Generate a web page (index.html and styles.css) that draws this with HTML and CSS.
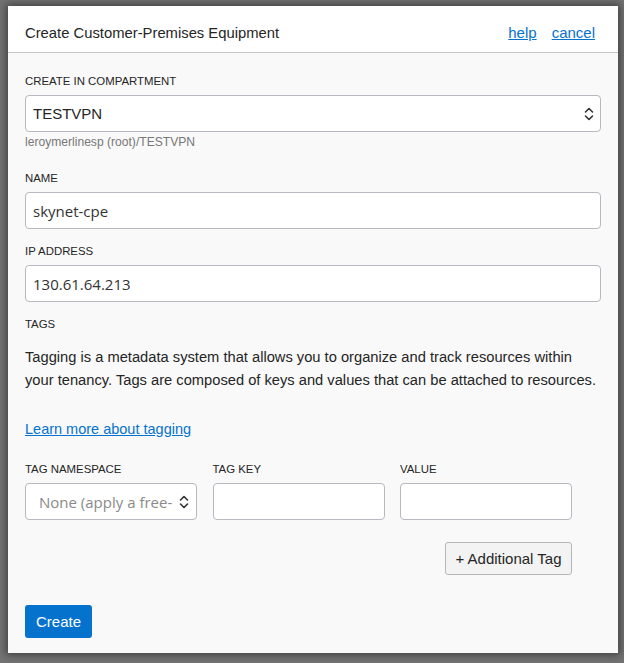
FILE: index.html
```html
<!DOCTYPE html>
<html>
<head>
<meta charset="utf-8">
<link rel="stylesheet" href="styles.css">
</head>
<body>
<div class="dialog">
  <header class="dlg-head">
    <h1 class="dlg-title">Create Customer-Premises Equipment</h1>
    <nav class="dlg-links">
      <a href="#" class="link">help</a>
      <a href="#" class="link">cancel</a>
    </nav>
  </header>
  <div class="dlg-body">
    <div class="field field-first">
      <div class="label">CREATE IN COMPARTMENT</div>
      <div class="control select">
        <span class="sel-text">TESTVPN</span>
        <svg class="chev" width="10" height="16" viewBox="0 0 10 16"><path d="M1.5 6 L5 2.5 L8.5 6 M1.5 10 L5 13.5 L8.5 10" fill="none" stroke="#333" stroke-width="1.6" stroke-linecap="round" stroke-linejoin="round"/></svg>
      </div>
      <div class="helper">leroymerlinesp (root)/TESTVPN</div>
    </div>
    <div class="field">
      <div class="label">NAME</div>
      <div class="control input"><span class="val">skynet-cpe</span></div>
    </div>
    <div class="field">
      <div class="label">IP ADDRESS</div>
      <div class="control input"><span class="val">130.61.64.213</span></div>
    </div>
    <div class="label">TAGS</div>
    <p class="desc">Tagging is a metadata system that allows you to organize and track resources within your tenancy. Tags are composed of keys and values that can be attached to resources.</p>
    <a href="#" class="link learn">Learn more about tagging</a>
    <div class="tags">
      <div class="tag-grid">
        <div class="tag-col">
          <div class="label">TAG NAMESPACE</div>
          <div class="control select small">
            <span class="val placeholder">None (apply a free-</span>
            <svg class="chev" width="10" height="16" viewBox="0 0 10 16"><path d="M1.5 6 L5 2.5 L8.5 6 M1.5 10 L5 13.5 L8.5 10" fill="none" stroke="#333" stroke-width="1.6" stroke-linecap="round" stroke-linejoin="round"/></svg>
          </div>
        </div>
        <div class="tag-col">
          <div class="label">TAG KEY</div>
          <div class="control input"></div>
        </div>
        <div class="tag-col">
          <div class="label">VALUE</div>
          <div class="control input"></div>
        </div>
      </div>
      <div class="add-row">
        <button class="btn-secondary">+ Additional Tag</button>
      </div>
    </div>
    <button class="btn-primary">Create</button>
  </div>
</div>
</body>
</html>
```

FILE: styles.css
```css
html, body {
  margin: 0;
  padding: 0;
}
body {
  background: #737373;
  width: 624px;
  height: 663px;
  overflow: hidden;
  font-family: "Liberation Sans", Arial, sans-serif;
  color: #252525;
  padding-top: 6px;
  box-sizing: border-box;
}
.dialog {
  margin-left: 8px;
  width: 610px;
  height: 647px;
  background: #f9f9f9;
  box-shadow: 0 0 8px 2px rgba(0, 0, 0, 0.45);
  display: flex;
  flex-direction: column;
}
.dlg-head {
  background: #fff;
  border-bottom: 1px solid #c4c6ca;
  display: flex;
  align-items: center;
  justify-content: space-between;
  padding: 17px 23px 9px 17px;
  height: 20px;
  flex: none;
}
.dlg-title {
  margin: 0;
  font-size: 14.8px;
  font-weight: normal;
  line-height: 20px;
  color: #252525;
}
.dlg-links {
  display: flex;
  gap: 15px;
}
.link {
  color: #0572ce;
  text-decoration: underline;
  font-size: 15px;
  line-height: 20px;
}
.dlg-body {
  padding: 21px 17px 0 17px;
  display: flex;
  flex-direction: column;
  align-items: flex-start;
}
.field {
  width: 576px;
  margin-bottom: 15px;
}
.field-first {
  margin-bottom: 22px;
}
.label {
  font-size: 11.4px;
  line-height: 14px;
  margin: 0 0 7px 0;
  color: #252525;
}
.control {
  box-sizing: border-box;
  height: 37px;
  background: #fff;
  border: 1px solid #b6b9bf;
  border-radius: 4px;
  display: flex;
  align-items: center;
  padding: 0 8px 0 7px;
  overflow: hidden;
}
.select {
  justify-content: space-between;
}
.sel-text {
  font-size: 15px;
  color: #252525;
}
.val {
  font-family: "Open Sans", "Noto Sans", sans-serif;
  font-size: 15px;
  color: #333;
  white-space: nowrap;
}
.chev {
  flex: none;
  margin-right: -2px;
}
.helper {
  margin-top: 3px;
  font-size: 12.1px;
  line-height: 14px;
  color: #777;
}
.desc {
  margin: 8px 0 0 0;
  font-size: 14.7px;
  line-height: 23px;
  color: #252525;
  width: 578px;
}
.learn {
  margin-top: 26px;
  line-height: 23px;
  font-size: 14.5px;
}
.tags {
  margin-top: 21px;
  width: 547px;
  display: flex;
  flex-direction: column;
}
.tag-grid {
  display: grid;
  grid-template-columns: 172px 172px 172px;
  column-gap: 15.5px;
}
.small {
  padding-left: 13px;
  padding-right: 9px;
}
.small .val {
  flex: 1;
  min-width: 0;
}
.placeholder {
  color: #8a8a8a;
}
.add-row {
  display: flex;
  justify-content: flex-end;
  margin-top: 22px;
}
.btn-secondary {
  height: 33px;
  width: 127px;
  background: #f3f3f3;
  border: 1px solid #b5b7bb;
  border-radius: 3px;
  font-family: "Liberation Sans", Arial, sans-serif;
  font-size: 15px;
  color: #252525;
  padding: 0;
}
.btn-primary {
  margin-top: 30px;
  height: 33px;
  width: 67px;
  background: #0572ce;
  border: none;
  border-radius: 3px;
  color: #fff;
  font-family: "Liberation Sans", Arial, sans-serif;
  font-size: 15px;
  padding: 0;
}
```
